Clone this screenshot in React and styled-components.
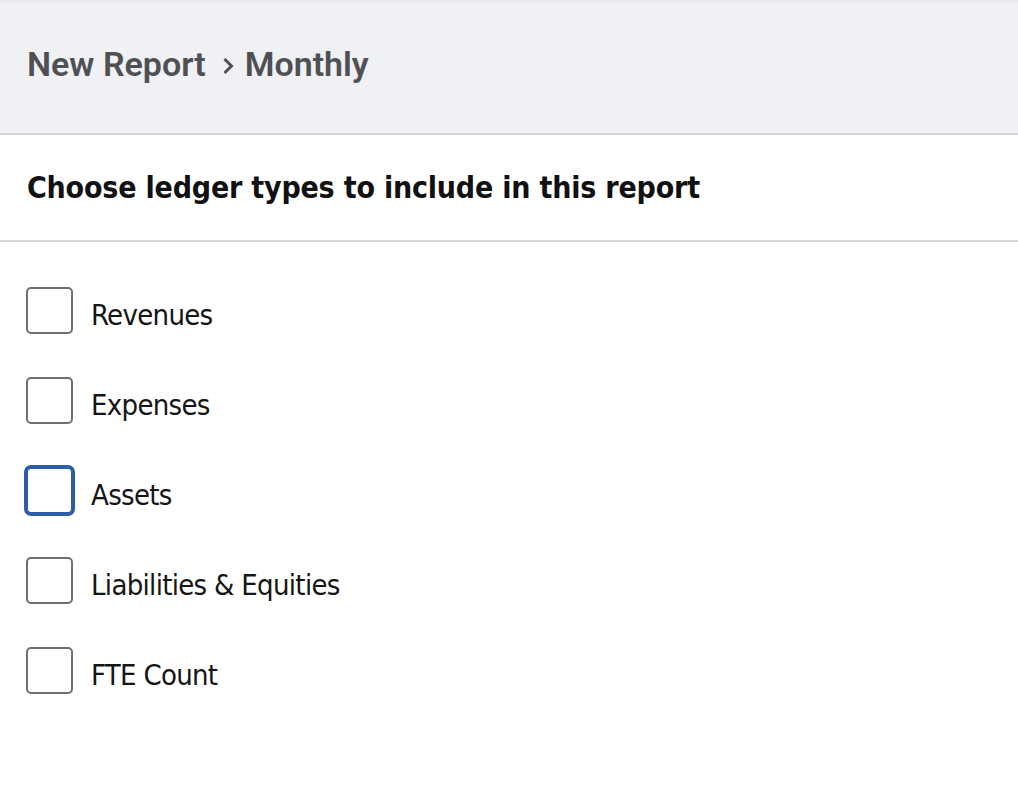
import React, { useState } from 'react';
import styled, { createGlobalStyle } from 'styled-components';

const GlobalStyle = createGlobalStyle`
  html, body {
    margin: 0;
    padding: 0;
    background: #ffffff;
  }
  body {
    font-family: Roboto, "Liberation Sans", sans-serif;
  }
`;

const Page = styled.div`
  width: 1018px;
  min-height: 792px;
  background: #fff;
`;

const Header = styled.header`
  height: 135px;
  background: #f0f1f5;
  border-bottom: 2px solid #d3d5d9;
  box-shadow: inset 0 3px 3px -2px rgba(0, 0, 0, 0.06);
  display: flex;
  align-items: center;
  padding: 0 27px 5px;
  box-sizing: border-box;
`;

const Crumb = styled.span`
  font-family: Roboto, "Liberation Sans", sans-serif;
  font-size: 34px;
  font-weight: 600;
  color: #4f5054;
`;

const Chevron = styled.span`
  display: inline-flex;
  margin: 4px 10px 0 16px;
  color: #4f5054;
`;

const TitleBar = styled.div`
  height: 107px;
  border-bottom: 2px solid #d5d7da;
  display: flex;
  align-items: center;
  padding: 0 27px;
  box-sizing: border-box;
`;

const Title = styled.h1`
  margin: 0;
  font-family: "DejaVu Sans Condensed", "DejaVu Sans", sans-serif;
  font-size: 30px;
  letter-spacing: -0.2px;
  font-weight: 700;
  color: #111;
`;

const List = styled.ul`
  list-style: none;
  margin: 0;
  padding: 45px 0 0 26px;
  display: flex;
  flex-direction: column;
  gap: 43px;
`;

const Row = styled.li`
  display: flex;
  align-items: center;
  gap: 18px;
`;

const Box = styled.button`
  width: 47px;
  height: 47px;
  flex: none;
  box-sizing: border-box;
  border-radius: 5px;
  background: #fff;
  padding: 0;
  cursor: pointer;
  border: 2px solid ${(p) => (p.$focused ? '#2d5da7' : '#6f6f6f')};
  box-shadow: ${(p) => (p.$focused ? '0 0 0 2px #2d5da7' : 'none')};
`;

const Label = styled.span`
  font-family: "DejaVu Sans Condensed", "DejaVu Sans", sans-serif;
  font-size: 29px;
  letter-spacing: -0.7px;
  line-height: 1;
  padding-top: 10px;
  color: #151515;
`;

const items = ['Revenues', 'Expenses', 'Assets', 'Liabilities & Equities', 'FTE Count'];

export default function App() {
  const [checked, setChecked] = useState({});
  return (
    <Page>
      <GlobalStyle />
      <Header>
        <Crumb>New Report</Crumb>
        <Chevron>
          <svg width="13" height="20" viewBox="0 0 13 20" fill="none">
            <path d="M2.5 3l7 7-7 7" stroke="currentColor" strokeWidth="3" />
          </svg>
        </Chevron>
        <Crumb>Monthly</Crumb>
      </Header>
      <TitleBar>
        <Title>Choose ledger types to include in this report</Title>
      </TitleBar>
      <List>
        {items.map((item) => (
          <Row key={item}>
            <Box
              $focused={item === 'Assets'}
              aria-pressed={!!checked[item]}
              onClick={() => setChecked((c) => ({ ...c, [item]: !c[item] }))}
            />
            <Label>{item}</Label>
          </Row>
        ))}
      </List>
    </Page>
  );
}
